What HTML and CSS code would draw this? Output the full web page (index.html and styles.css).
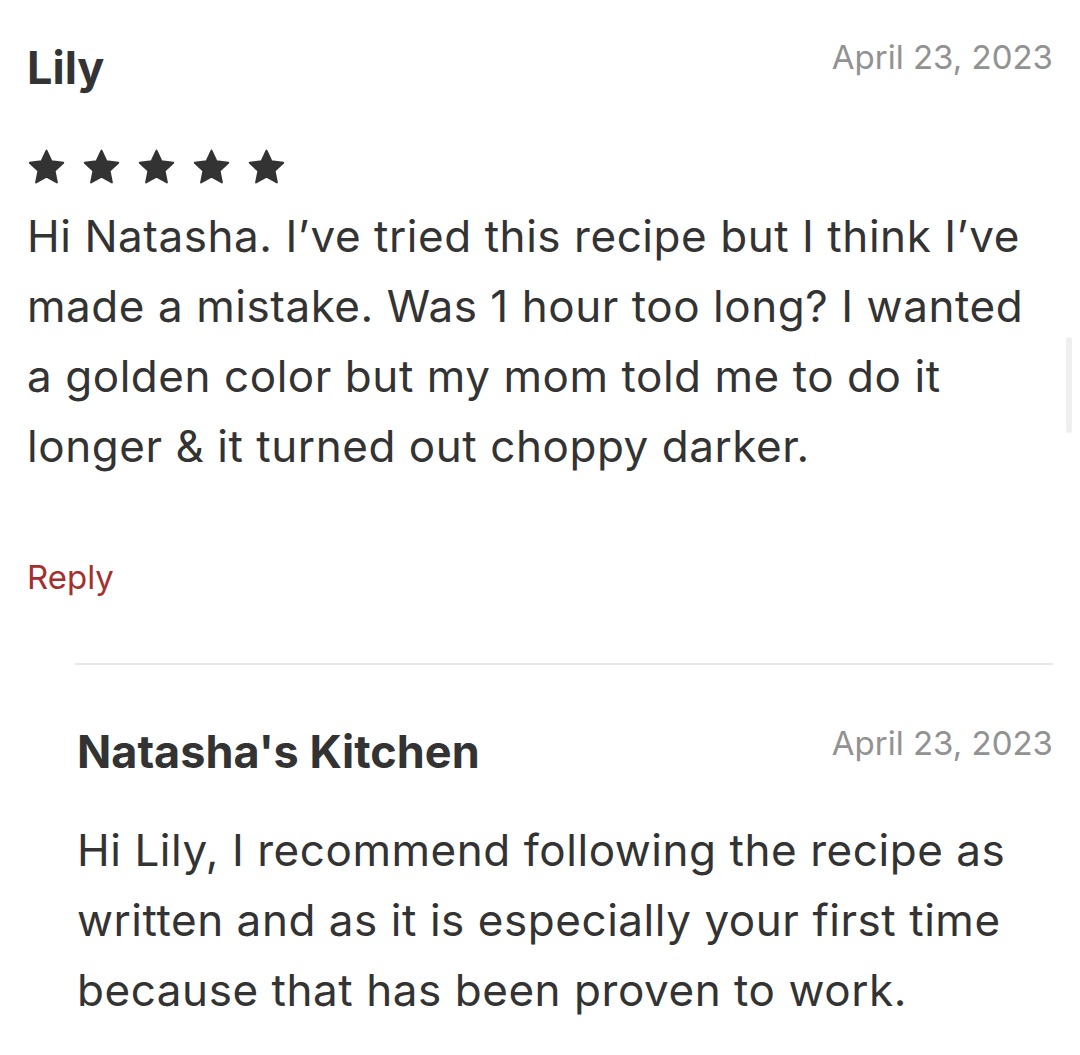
FILE: index.html
```html
<!DOCTYPE html>
<html lang="en">
<head>
<meta charset="utf-8">
<title>Comments</title>
<link rel="stylesheet" href="styles.css">
</head>
<body>
<div class="comments">
  <article class="comment">
    <header class="comment-head">
      <h3 class="author">Lily</h3>
      <time class="date">April 23, 2023</time>
    </header>
    <div class="stars" aria-label="5 stars">
      <svg class="star" viewBox="0 0 24 24"><path d="M12 1.6l3.1 6.6 7.2.9-5.3 5 1.4 7.1L12 17.7l-6.4 3.5 1.4-7.1-5.3-5 7.2-.9z" stroke-linejoin="round" stroke-width="1.2"/></svg>
      <svg class="star" viewBox="0 0 24 24"><path d="M12 1.6l3.1 6.6 7.2.9-5.3 5 1.4 7.1L12 17.7l-6.4 3.5 1.4-7.1-5.3-5 7.2-.9z" stroke-linejoin="round" stroke-width="1.2"/></svg>
      <svg class="star" viewBox="0 0 24 24"><path d="M12 1.6l3.1 6.6 7.2.9-5.3 5 1.4 7.1L12 17.7l-6.4 3.5 1.4-7.1-5.3-5 7.2-.9z" stroke-linejoin="round" stroke-width="1.2"/></svg>
      <svg class="star" viewBox="0 0 24 24"><path d="M12 1.6l3.1 6.6 7.2.9-5.3 5 1.4 7.1L12 17.7l-6.4 3.5 1.4-7.1-5.3-5 7.2-.9z" stroke-linejoin="round" stroke-width="1.2"/></svg>
      <svg class="star" viewBox="0 0 24 24"><path d="M12 1.6l3.1 6.6 7.2.9-5.3 5 1.4 7.1L12 17.7l-6.4 3.5 1.4-7.1-5.3-5 7.2-.9z" stroke-linejoin="round" stroke-width="1.2"/></svg>
    </div>
    <p class="text">Hi Natasha. I’ve tried this recipe but I think I’ve made a mistake. Was 1 hour too long? I wanted a golden color but my mom told me to do it longer &amp; it turned out choppy darker.</p>
    <a class="reply-link" href="#">Reply</a>

    <div class="replies">
      <article class="comment reply">
        <header class="comment-head">
          <h3 class="author">Natasha's Kitchen</h3>
          <time class="date">April 23, 2023</time>
        </header>
        <p class="text">Hi Lily, I recommend following the recipe as written and as it is especially your first time because that has been proven to work.</p>
      </article>
    </div>
  </article>
</div>
<div class="scroll-thumb"></div>
</body>
</html>
```
FILE: styles.css
```css
html, body {
  margin: 0;
  padding: 0;
  background: #ffffff;
}
body {
  font-family: Inter, "Noto Sans", sans-serif;
  color: #333333;
  width: 1080px;
  height: 1055px;
  overflow: hidden;
}
.comments {
  padding: 0 27px 0 27px;
}
.comment-head {
  display: flex;
  justify-content: space-between;
  align-items: flex-start;
}
.author {
  margin: 0;
  font-size: 45px;
  font-weight: 700;
  line-height: 53px;
  color: #333333;
}
.date {
  font-size: 33px;
  line-height: 40px;
  color: #929292;
}
.comment > .comment-head {
  padding-top: 41px;
}
.comment > .comment-head .date {
  margin-top: -4px;
}
.stars {
  display: flex;
  gap: 16px;
  margin-top: 54px;
}
.star {
  width: 39px;
  height: 39px;
  fill: #333333;
  stroke: #333333;
}
.text {
  margin: 14px 0 0 0;
  font-size: 44px;
  line-height: 70px;
  letter-spacing: 0.55px;
}
.reply-link {
  display: inline-block;
  margin-top: 76px;
  font-size: 33px;
  line-height: 40px;
  color: #a3302e;
  text-decoration: none;
}
.replies {
  margin-top: 66px;
  margin-left: 48px;
  border-top: 2px solid #e8e8e8;
}
.reply > .comment-head {
  padding-top: 60px;
  padding-left: 2px;
}
.reply > .comment-head .date {
  margin-top: -2px;
}
.reply .text {
  margin-top: 37px;
  padding-left: 2px;
}
.scroll-thumb {
  position: fixed;
  right: 8px;
  top: 337px;
  width: 6px;
  height: 96px;
  border-radius: 3px;
  background: #efefef;
}
```
